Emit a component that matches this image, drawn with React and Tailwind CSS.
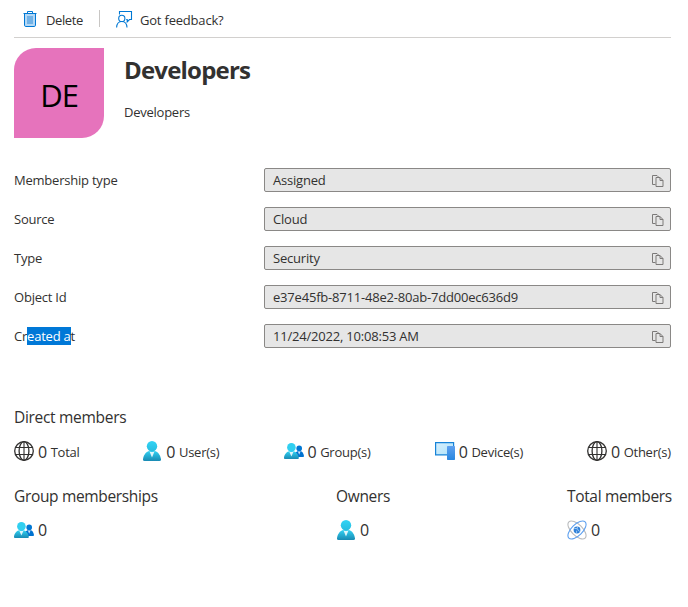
import React from "react";

const fields = [
  { label: "Membership type", value: "Assigned" },
  { label: "Source", value: "Cloud" },
  { label: "Type", value: "Security" },
  { label: "Object Id", value: "e37e45fb-8711-48e2-80ab-7dd00ec636d9" },
  { label: "Created at", value: "11/24/2022, 10:08:53 AM" },
];

function TrashIcon() {
  return (
    <svg width="14" height="16" viewBox="0 0 14 16" fill="none">
      <path d="M4.500 2V.5h5V2M.5 2.500h13" stroke="#0078d4" />
      <path d="M1.500 3v11.200c0 .8.5 1.300 1.300 1.300h8.400c.8 0 1.300-.5 1.300-1.300V3" fill="#b4d8f5" stroke="#0078d4" />
      <path d="M4 5h6v8H4z" fill="#72b2e6" />
    </svg>
  );
}

function FeedbackIcon() {
  return (
    <svg width="17" height="17" viewBox="0 0 17 17" fill="none" stroke="#0078d4" strokeWidth="1.1">
      <path d="M3.500 3.500v-3h12v8h-2l-2.300 2.300V8.500h-1" />
      <circle cx="5.800" cy="7.400" r="3.100" />
      <path d="M.6 16.500c.2-3.600 2.200-6 5.200-6s5 2.400 5.200 6" />
    </svg>
  );
}

function CopyIcon() {
  return (
    <svg className="mt-0.5" width="12" height="12" viewBox="0 0 12 12" fill="none" stroke="#7c7a79" strokeWidth="1">
      <path d="M3.500 9.500h-3v-9h4.500l1.500 1.500" />
      <path d="M4 2.500h4l3 3v6H4z" />
      <path d="M8 2.500v3h3" />
    </svg>
  );
}

function GlobeIcon() {
  return (
    <svg width="20" height="20" viewBox="0 0 20 20" fill="none" stroke="#323130" strokeWidth="1.300">
      <circle cx="10" cy="10" r="9.300" />
      <ellipse cx="10" cy="10" rx="4.900" ry="9.300" />
      <path d="M10 .8v18.400M1.500 6.500h17M1.500 13.500h17" strokeWidth="1.100" />
    </svg>
  );
}

function UserGradient({ id }) {
  return (
    <linearGradient id={id} x1="0" y1="0" x2="0" y2="1">
      <stop stopColor="#32d4f5" />
      <stop offset="1" stopColor="#198ab3" />
    </linearGradient>
  );
}

function UserIcon({ id }) {
  return (
    <svg className="mx-px" width="18" height="20" viewBox="0 0 18 20">
      <defs>
        <UserGradient id={id} />
        <linearGradient id={id + "h"} x1="0" y1="0" x2="0" y2="1">
          <stop stopColor="#32d4f5" />
          <stop offset="1" stopColor="#28bde0" />
        </linearGradient>
      </defs>
      <path d="M1.600 20A1.600 1.600 0 0 1 0 18.200C.7 13.500 3.500 9.500 9 9.500s8.300 4 9 8.700A1.600 1.600 0 0 1 16.400 20z" fill={`url(#${id})`} />
      <path d="M9 11c-1 0-1.900-.3-2.600-.8L9 16.400l2.600-6.200c-.7.5-1.600.8-2.600.8z" fill="#fff" opacity=".85" />
      <circle cx="9" cy="5.200" r="5.200" fill={`url(#${id}h)`} />
    </svg>
  );
}

function GroupIcon({ id }) {
  return (
    <svg width="20" height="16" viewBox="0 0 20 16">
      <defs>
        <UserGradient id={id} />
      </defs>
      <path d="M10 14c.4-3.700 2-6 5.200-6 2.900 0 4.400 2 4.800 4.900a1 1 0 0 1-1 1.100z" fill="#0072d0" />
      <path d="M13.800 8.300h2.800l-1.400 3.500z" fill="#cfe6fa" />
      <circle cx="15.200" cy="5.400" r="2.800" fill="#0078d4" />
      <path d="M1.300 16A1.200 1.200 0 0 1 0 14.600C.6 10.900 2.800 8 7.300 8s6.900 2.900 7.500 6.600a1.200 1.200 0 0 1-1.300 1.400z" fill={`url(#${id})`} />
      <path d="M7.400 9c-.8 0-1.600-.2-2.200-.6l2.200 5 2.200-5c-.6.4-1.400.6-2.200.6z" fill="#fff" opacity=".85" />
      <circle cx="7.400" cy="4.400" r="4.300" fill="#30cff0" />
    </svg>
  );
}

function DeviceIcon() {
  return (
    <svg width="20" height="18" viewBox="0 0 20 18">
      <defs>
        <linearGradient id="screen" x1="0" y1="0" x2="1" y2="1">
          <stop stopColor="#d8effd" />
          <stop offset="1" stopColor="#ade3fa" />
        </linearGradient>
        <linearGradient id="phone" x1="0" y1="0" x2="0" y2="1">
          <stop stopColor="#5ea0ef" />
          <stop offset="1" stopColor="#2987e0" />
        </linearGradient>
      </defs>
      <path d="M.6.600h18v12.300H.6z" fill="url(#screen)" stroke="#1683d8" strokeWidth="1.200" />
      <rect x="12" y="4" width="8" height="14" rx=".7" fill="url(#phone)" />
    </svg>
  );
}

function AtomIcon() {
  return (
    <svg width="20" height="20" viewBox="0 0 20 20" fill="none">
      <ellipse cx="10" cy="10" rx="11.500" ry="5.600" transform="rotate(45 10 10)" stroke="#b9bbbd" strokeWidth="1.100" />
      <ellipse cx="10" cy="10" rx="11.500" ry="5.600" transform="rotate(-45 10 10)" stroke="#5ea0ef" strokeWidth="1.100" />
      <circle cx="10" cy="10" r="3.400" fill="#2f80d8" />
      <path d="M7.200 8.300l3 .5 2.300 2.800M9.400 12.800l.4-2.200M10.500 6.800l-.3 2" stroke="#b5d8fa" strokeWidth=".8" />
    </svg>
  );
}

function Count({ icon, label, className = "" }) {
  return (
    <div className={"flex h-5 items-center whitespace-nowrap " + className}>
      <span className="shrink-0">{icon}</span>
      <span className={"ml-1 text-base leading-5 tracking-normal" + (label ? " pt-0.5" : "")}>0</span>
      {label && <span className="ml-[3.500px] pt-0.5 text-[13px] leading-5 tracking-[-0.25px]">{label}</span>}
    </div>
  );
}

export default function App() {
  return (
    <main className="h-[607px] w-[688px] overflow-hidden bg-white pr-[17px] pl-[14px] font-['Open_Sans','Noto_Sans',sans-serif] text-[13px] leading-5 text-[#323130]">
      <div className="flex h-[38px] items-center border-b border-[#d2d0ce] pl-[9px] whitespace-nowrap">
        <TrashIcon />
        <span className="mt-[3px] ml-[9px] w-[37px] tracking-[-0.4px]">Delete</span>
        <span className="ml-4 h-[17px] w-px bg-[#c8c6c4]" />
        <span className="mt-px ml-4">
          <FeedbackIcon />
        </span>
        <span className="mt-[3px] ml-[7px] tracking-[-0.2px]">Got feedback?</span>
      </div>

      <header className="mt-[10px] flex">
        <div className="flex size-[90px] items-center justify-center rounded-tl-[22px] rounded-br-[22px] bg-[#e673bc] pt-[3px] text-[31px] tracking-[-1px] text-black">
          DE
        </div>
        <div className="ml-5">
          <h1 className="mt-[6px] text-2xl leading-8 font-bold tracking-[-0.8px]">Developers</h1>
          <p className="mt-4 tracking-[-0.25px]">Developers</p>
        </div>
      </header>

      <dl className="mt-[30px] flex flex-col gap-[15px]">
        {fields.map(({ label, value }) => (
          <div key={label} className="flex h-6 items-center">
            <dt className="w-[250px] tracking-[-0.22px]">
              {label === "Created at" ? (
                <>
                  Cr<span className="bg-[#0078d7] text-white">eated a</span>t
                </>
              ) : (
                label
              )}
            </dt>
            <dd className="flex h-6 flex-1 items-center justify-between rounded-[2px] border border-[#8a8886] bg-[#e6e6e6] pr-[6px] pl-2 tracking-[-0.2px]">
              <span>{value}</span>
              <CopyIcon />
            </dd>
          </div>
        ))}
      </dl>

      <h2 className="mt-[57px] text-[15.5px] leading-6 tracking-[-0.3px]">Direct members</h2>
      <div className="mt-3 flex justify-between">
        <Count className="w-[65px]" icon={<GlobeIcon />} label="Total" />
        <Count className="w-[78px]" icon={<UserIcon id="user-a" />} label="User(s)" />
        <Count className="w-[88px]" icon={<GroupIcon id="group-a" />} label="Group(s)" />
        <Count className="w-[89px]" icon={<DeviceIcon />} label="Device(s)" />
        <Count className="w-[84px]" icon={<GlobeIcon />} label="Other(s)" />
      </div>

      <div className="mt-[23px] flex justify-between text-[15.5px] leading-6 tracking-[-0.34px] whitespace-nowrap">
        <section className="w-[144px]">
          <h2>Group memberships</h2>
          <Count className="mt-3" icon={<GroupIcon id="group-b" />} />
        </section>
        <section className="w-[53px]">
          <h2>Owners</h2>
          <Count className="mt-3" icon={<UserIcon id="user-b" />} />
        </section>
        <section className="w-[104px]">
          <h2>Total members</h2>
          <Count className="mt-3" icon={<AtomIcon />} />
        </section>
      </div>
    </main>
  );
}
